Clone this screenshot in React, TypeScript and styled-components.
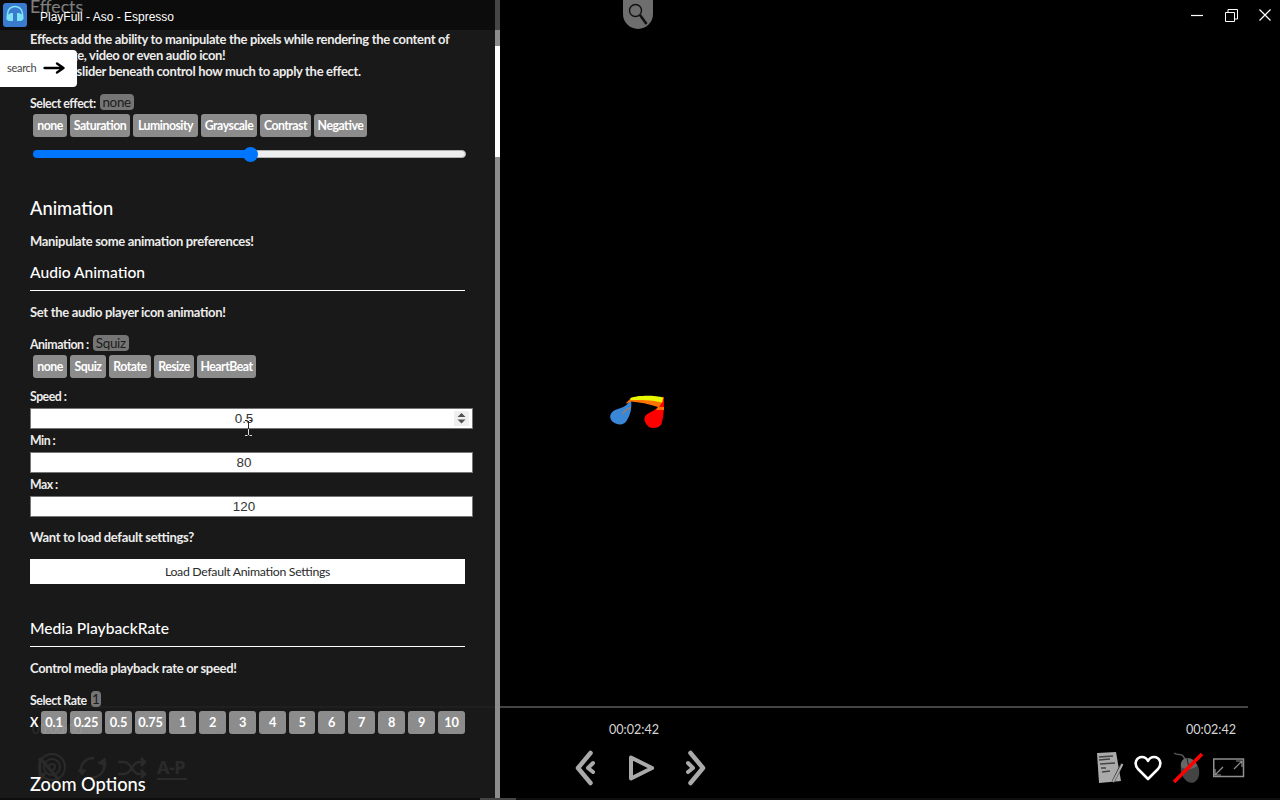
import React from "react";
import styled, { createGlobalStyle } from "styled-components";

const GlobalStyle = createGlobalStyle`
  * { box-sizing: border-box; }
  body {
    margin: 0;
    background: #000;
    color: #fff;
    font-family: Lato, "Open Sans", sans-serif;
    font-feature-settings: "liga" 1;
    overflow: hidden;
  }
  button, input { font-family: inherit; font-feature-settings: inherit; }
`;

const Window = styled.div`
  position: relative;
  width: 1280px;
  height: 800px;
  overflow: hidden;
  background: #000;
`;

/* ---------- player ---------- */

const Player = styled.main`
  height: 100%;
  display: flex;
  flex-direction: column;
`;

const Stage = styled.div`
  height: 706px;
  padding: 395px 0 0 609px;
`;

const NoteDrawing = styled.svg`
  display: block;
`;

const SeekBar = styled.div`
  height: 2px;
  margin: 0 32px;
  background: #444;
`;

const Times = styled.div`
  display: grid;
  grid-template-columns: 1fr 1fr 1fr;
  height: 42px;
  padding: 0 44px 0 32px;
  line-height: 43px;
  font-size: 12.6px;
  color: #d6d6d6;
  span:nth-child(2) { text-align: center; }
  span:nth-child(3) { text-align: right; }
`;

const Controls = styled.div`
  display: flex;
  align-items: center;
  justify-content: space-between;
  height: 36px;
  padding: 0 35px 0 37px;
`;

const Group = styled.div<{ $gap: number; $width?: number; $end?: boolean }>`
  display: flex;
  align-items: center;
  gap: ${(p) => p.$gap}px;
  width: ${(p) => (p.$width ? `${p.$width}px` : "auto")};
  justify-content: ${(p) => (p.$end ? "flex-end" : "flex-start")};
`;

const AutoPlay = styled.span`
  width: 30px;
  height: 23px;
  margin-left: -1px;
  border-bottom: 2px solid #aaa;
  color: #aaa;
  font: 700 18px/21px "Noto Sans", sans-serif;
  letter-spacing: -0.5px;
  white-space: nowrap;
`;

const BottomStrip = styled.div`
  height: 2px;
  margin-top: auto;
  padding-left: 480px;
  background: #0e0e0e;
`;

const BottomHandle = styled.div`
  width: 36px;
  height: 2px;
  background: #444;
`;

/* ---------- settings panel ---------- */

const Panel = styled.aside`
  position: absolute;
  inset: 0 auto 2px 0;
  width: 500px;
  display: flex;
  overflow: hidden;
`;

const Settings = styled.div`
  flex: 1;
  min-width: 0;
  padding: 0 30px;
  background: rgba(28, 28, 28, 0.9);
`;

const ScrollTrack = styled.div`
  flex: none;
  width: 5px;
  padding-top: 46px;
  background: #8c8c8c;
`;

const ScrollThumb = styled.div`
  height: 111px;
  background: #fff;
`;

const Heading = styled.h2<{ $top: number; $light?: boolean }>`
  height: 24px;
  margin: ${(p) => p.$top}px 0 0;
  font-size: ${(p) => (p.$light ? 17.7 : 18.3)}px;
  font-weight: ${(p) => (p.$light ? 400 : 500)};
  line-height: 24px;
`;

const SubHeading = styled.h3<{ $top: number }>`
  height: 29px;
  margin: ${(p) => p.$top}px 0 0;
  border-bottom: 1px solid #fff;
  font-size: 15.6px;
  font-weight: 500;
  line-height: 20px;
`;

const Text = styled.p<{ $top: number }>`
  position: relative;
  top: -1px;
  margin: ${(p) => p.$top}px 0 0;
  font-size: 13px;
  font-weight: 700;
  line-height: 16px;
  letter-spacing: -0.32px;
  color: #ececec;
  white-space: nowrap;
`;

const Choice = styled.div<{ $top: number }>`
  display: flex;
  align-items: center;
  height: 20px;
  margin-top: ${(p) => p.$top}px;
  gap: 4px;
  color: #ececec;
  font-size: 12.4px;
  font-weight: 700;
  letter-spacing: -0.48px;
  white-space: nowrap;
`;

const Current = styled.span<{ $width: number }>`
  width: ${(p) => p.$width}px;
  height: 16px;
  margin-top: -2px;
  border-radius: 4px;
  background: #757575;
  color: #1c1c1c;
  font-size: 13.4px;
  font-weight: 400;
  line-height: 17px;
  letter-spacing: -0.3px;
  text-align: center;
`;

const Options = styled.div<{ $rate?: boolean }>`
  display: flex;
  gap: 3px;
  height: 23px;
  margin: 1px 0 0 ${(p) => (p.$rate ? 0 : 3)}px;
  line-height: 23px;
`;

const RateSign = styled.span`
  width: 8px;
  font-size: 12.5px;
  font-weight: 700;
  line-height: 23px;
`;

const Option = styled.button<{ $width: number; $rate?: boolean }>`
  width: ${(p) => p.$width}px;
  flex: none;
  padding: 0;
  border: 0;
  border-radius: 3px;
  background: rgba(255, 255, 255, 0.5);
  color: #fff;
  font-size: ${(p) => (p.$rate ? 12.8 : 12.3)}px;
  font-weight: 700;
  letter-spacing: ${(p) => (p.$rate ? -0.2 : -0.5)}px;
  line-height: 23px;
  white-space: nowrap;
`;

const Slider = styled.div`
  display: flex;
  align-items: center;
  height: 16px;
  margin: 9px -1px 0 3px;
`;

const SliderFill = styled.div`
  width: 217px;
  height: 8px;
  border-radius: 4px 0 0 4px;
  background: #0075ff;
`;

const SliderThumb = styled.div`
  width: 15px;
  height: 15px;
  margin: 0 -8px 0 -7px;
  border-radius: 50%;
  background: #0075ff;
  z-index: 1;
`;

const SliderRest = styled.div`
  flex: 1;
  height: 8px;
  border: 1px solid #b2b2b2;
  border-radius: 0 4px 4px 0;
  background: #efefef;
`;

const Label = styled.label<{ $top: number }>`
  display: block;
  height: 16px;
  margin-top: ${(p) => p.$top}px;
  color: #ececec;
  font-size: 12.3px;
  font-weight: 700;
  line-height: 17px;
  letter-spacing: -0.5px;
`;

const Field = styled.div`
  display: flex;
  align-items: center;
  width: 443px;
  height: 21px;
  margin-top: 4px;
  padding-right: 3px;
  border: 1px solid #767676;
  background: #fff;
  color: #333;
  font: 13.4px/19px "Liberation Sans", sans-serif;
`;

const FieldValue = styled.span`
  flex: 1;
  padding-right: 8px;
  padding-left: 11px;
  text-align: center;
`;

const Spinner = styled.span`
  display: flex;
  width: 15px;
  height: 15px;
  background: #efefef;
`;

const SpinnerSpace = styled.span`
  width: 15px;
`;

const LoadDefaults = styled.button`
  display: block;
  width: 435px;
  height: 25px;
  margin-top: 13px;
  border: 0;
  padding: 0;
  background: #fff;
  color: #2a2a2a;
  font-size: 12.3px;
  line-height: 25px;
  letter-spacing: -0.31px;
`;

/* ---------- overlays ---------- */

const TitleBar = styled.header`
  position: absolute;
  inset: 0 0 auto 0;
  display: flex;
  align-items: center;
  height: 30px;
  padding: 0 7px 0 3px;
  background: rgba(0, 0, 0, 0.5);
`;

const AppTitle = styled.span`
  flex: 1;
  margin: 3px 0 0 13px;
  font: 12px "Liberation Sans", sans-serif;
`;

const SearchTab = styled.div`
  position: absolute;
  top: 50px;
  left: 0;
  display: flex;
  align-items: center;
  gap: 7px;
  width: 77px;
  height: 37px;
  padding-left: 7px;
  border-radius: 0 4px 4px 0;
  background: #fff;
  color: #444;
  font-size: 11px;
  letter-spacing: -0.3px;
  span { margin-top: -3px; }
  svg { margin-top: -1px; }
`;

const LensTab = styled.div`
  position: absolute;
  top: 0;
  left: 623px;
  width: 30px;
  height: 29px;
  border-radius: 0 0 15px 15px;
  background: #6e6e6e;
`;

const TextCursor = styled.svg`
  position: absolute;
  top: 420px;
  left: 244px;
`;

const EFFECTS: [string, number][] = [
  ["none", 34], ["Saturation", 60], ["Luminosity", 65], ["Grayscale", 56], ["Contrast", 51], ["Negative", 53],
];
const ANIMATIONS: [string, number][] = [
  ["none", 34], ["Squiz", 36], ["Rotate", 42], ["Resize", 40], ["HeartBeat", 59],
];
const RATES: [string, number][] = [
  ["0.1", 26], ["0.25", 32], ["0.5", 27], ["0.75", 31], ["1", 27], ["2", 27], ["3", 27],
  ["4", 27], ["5", 26], ["6", 27], ["7", 27], ["8", 27], ["9", 27], ["10", 27],
];

const Note = () => (
  <NoteDrawing width="56" height="34" viewBox="0 0 56 34">
    <path d="M22 4C18 12 12 13 6 15C0 18 0 24 4 27C9 31 16 30 18 25C22 19 23 12 22 4Z" fill="#3a87d8" />
    <path d="M54 2C52 12 46 15 40 18C33 21 35 28 40 32C45 34 52 33 53 27C55 20 55 11 55 2Z" fill="#f00" />
    <path d="M17 8L22 3L54 6L50 12H55V15H47L49 12C40 9 30 7 22 6.500L18 8.500ZM22 12C18 14 14 16 13 20C15 17 18 14 22 13Z" fill="#ff7300" />
    <path d="M21.500 3C28 0 46 0 54.500 2.500L53 7.500C43 5 31 5 21.500 5Z" fill="#e8f800" />
  </NoteDrawing>
);

const NumberField = ({ value, spin }: { value: string; spin?: boolean }) => (
  <Field>
    <FieldValue>{value}</FieldValue>
    {spin ? (
      <Spinner>
        <svg width="15" height="15" viewBox="0 0 15 15" fill="#505050">
          <path d="M3.500 6L7.500 2L11.500 6ZM3.500 8.500L7.500 12.500L11.500 8.500Z" />
        </svg>
      </Spinner>
    ) : (
      <SpinnerSpace />
    )}
  </Field>
);

export default function App() {
  return (
    <Window>
      <GlobalStyle />
      <Player>
        <Stage><Note /></Stage>
        <SeekBar />
        <Times><span>00:00:00</span><span>00:02:42</span><span>00:02:42</span></Times>
        <Controls>
          <Group $gap={11} $width={300}>
            <svg width="30" height="30" viewBox="0 0 30 30" fill="none" stroke="#aaa" strokeWidth="2">
              <circle cx="15" cy="14" r="13" /><circle cx="15" cy="14" r="8" /><circle cx="15" cy="14" r="3" />
              <path d="M3 5L3 26L8 20M3 5L22 27" strokeWidth="3" />
            </svg>
            <svg width="29" height="26" viewBox="0 0 29 26" fill="none" stroke="#aaa" strokeWidth="2.500">
              <path d="M3 16C2 9 8 3 16 3M26 8C28 16 21 23 12 23" />
              <path d="M0 15L4 20L8 15ZM20 8L27 3L28 11Z" fill="#aaa" strokeWidth="1" />
            </svg>
            <svg width="29" height="22" viewBox="0 0 29 22" fill="none" stroke="#aaa" strokeWidth="2.500">
              <path d="M0 5H6C14 5 14 17 21 17H27M0 17H6C14 17 14 5 21 5H27M23 1L27 5L23 9M23 13L27 17L23 21" />
            </svg>
            <AutoPlay>A-P</AutoPlay>
          </Group>
          <Group $gap={31}>
            <svg width="22" height="36" viewBox="0 0 22 36" fill="none" stroke="#aaa" strokeWidth="4.500" strokeLinecap="round" strokeLinejoin="round">
              <path d="M16.500 3L4 18L16.500 33" /><path d="M19 13L14 18L19 22" strokeWidth="4" />
            </svg>
            <svg width="28" height="28" viewBox="0 0 28 28" fill="none" stroke="#aaa" strokeWidth="4" strokeLinejoin="round">
              <path d="M4 3.500V24.500L25 14Z" />
            </svg>
            <svg width="22" height="36" viewBox="0 0 22 36" fill="none" stroke="#aaa" strokeWidth="4.500" strokeLinecap="round" strokeLinejoin="round">
              <path d="M4.500 3L17 18L4.500 33" /><path d="M2 13L7 18L2 22" strokeWidth="4" />
            </svg>
          </Group>
          <Group $gap={10} $width={300} $end>
            <svg width="28" height="32" viewBox="0 0 28 32">
              <path d="M1 1L20 0L25 29L3 31Z" fill="#aaa" />
              <path d="M3 5L17 4M3 8L14 7M4 12L19 11M5 16L10 16M6 20L14 19" stroke="#444" strokeWidth="1.300" />
              <path d="M17 30L26 12" stroke="#333" strokeWidth="3" />
              <path d="M17 30L26.500 12" stroke="#aaa" strokeWidth="2" />
            </svg>
            <svg width="28" height="26" viewBox="0 0 28 26" fill="none" stroke="#fff" strokeWidth="2.600" strokeLinejoin="round">
              <path d="M14 24L4 14C-1 8 3 2 8 2C11 2 13 4 14 6C15 4 17 2 20 2C25 2 29 8 24 14Z" />
            </svg>
            <svg width="31" height="32" viewBox="0 0 31 32" fill="none">
              <path d="M2 1C6 4 9 1 11 4L13 7" stroke="#555" strokeWidth="1.500" />
              <ellipse cx="18" cy="18.500" rx="9" ry="12.500" transform="rotate(-14 18 18.500)" fill="#444" />
              <path d="M9 15C8 10 11 6 15 6C20 6 24 10 25 14C20 18 14 18 9 15Z" fill="#666" />
              <path d="M15 6L17 16" stroke="#222" />
              <path d="M2 30L30 2" stroke="#f00" strokeWidth="3.500" />
            </svg>
            <svg width="32" height="20" viewBox="0 0 32 20" fill="none" stroke="#8f8f8f" strokeWidth="1.500">
              <path d="M.75 1H30.500V18.500H.75Z" />
              <path d="M21 11L29 3M23 3H29V9M10 9L2 17M2 11V17H8" strokeWidth="1.200" />
            </svg>
          </Group>
        </Controls>
        <BottomStrip><BottomHandle /></BottomStrip>
      </Player>

      <Panel>
        <Settings>
          <Heading $top={-5} $light>Effects</Heading>
          <Text $top={13}>
            Effects add the ability to manipulate the pixels while rendering the content of<br />
            the image, video or even audio icon!<br />
            And the slider beneath control how much to apply the effect.
          </Text>
          <Choice $top={13}>Select effect: <Current $width={34}>none</Current></Choice>
          <Options>{EFFECTS.map(([n, w]) => <Option key={n} $width={w}>{n}</Option>)}</Options>
          <Slider><SliderFill /><SliderThumb /><SliderRest /></Slider>

          <Heading $top={34}>Animation</Heading>
          <Text $top={14}>Manipulate some animation preferences!</Text>
          <SubHeading $top={12}>Audio Animation</SubHeading>
          <Text $top={14}>Set the audio player icon animation!</Text>
          <Choice $top={13}>Animation : <Current $width={36}>Squiz</Current></Choice>
          <Options>{ANIMATIONS.map(([n, w]) => <Option key={n} $width={w}>{n}</Option>)}</Options>
          <Label $top={10}>Speed :</Label>
          <NumberField value="0.5" spin />
          <Label $top={3}>Min :</Label>
          <NumberField value="80" />
          <Label $top={3}>Max :</Label>
          <NumberField value="120" />
          <Text $top={13}>Want to load default settings?</Text>
          <LoadDefaults>Load Default Animation Settings</LoadDefaults>

          <SubHeading $top={34}>Media PlaybackRate</SubHeading>
          <Text $top={14}>Control media playback rate or speed!</Text>
          <Choice $top={13}>Select Rate <Current $width={10}>1</Current></Choice>
          <Options $rate>
            <RateSign>X</RateSign>
            {RATES.map(([n, w]) => <Option key={n} $width={w} $rate>{n}</Option>)}
          </Options>

          <Heading $top={38}>Zoom Options</Heading>
        </Settings>
        <ScrollTrack><ScrollThumb /></ScrollTrack>
      </Panel>

      <TextCursor width="9" height="16" viewBox="0 0 9 16" fill="none" strokeWidth="1">
        <path d="M1 .5H3.500M5.500 .5H8M4.500 1V9" stroke="#222" />
        <path d="M4.500 9V15M1 15.500H3.500M5.500 15.500H8" stroke="#ddd" />
      </TextCursor>

      <SearchTab>
        <span>search</span>
        <svg width="22" height="12" viewBox="0 0 22 12" fill="none" stroke="#000" strokeWidth="2.300" strokeLinecap="round" strokeLinejoin="round">
          <path d="M1.500 6H20M14 1.500L20.500 6L14 10.500" />
        </svg>
      </SearchTab>

      <TitleBar>
        <svg width="24" height="24" viewBox="0 0 24 24">
          <rect width="24" height="24" rx="3" fill="#3a7bd0" />
          <path d="M4.500 14V11C4.500 1 19.500 1 19.500 11V14" fill="none" stroke="#7fe3f5" strokeWidth="1.600" />
          <path d="M8 10H10V18H7C2 18 2 12 8 10ZM16 10H14V18H17C22 18 22 12 16 10Z" fill="#7fe3f5" />
        </svg>
        <AppTitle>PlayFull - Aso - Espresso</AppTitle>
        <svg width="84" height="14" viewBox="0 0 84 14" fill="none" stroke="#fff" strokeWidth="1.200">
          <path d="M2 7.500H14" />
          <path d="M36.500 4.500H45.500V13.500H36.500ZM39 4V1.500H48.500V11H46" strokeWidth="1" />
          <path d="M70.500 1.500L81.500 12.500M81.500 1.500L70.500 12.500" />
        </svg>
      </TitleBar>

      <LensTab>
        <svg width="30" height="29" viewBox="0 0 30 29" fill="none" stroke="#111">
          <circle cx="12.500" cy="10.500" r="6" strokeWidth="1.400" />
          <path d="M17 15L23.500 24" strokeWidth="2.500" />
        </svg>
      </LensTab>
    </Window>
  );
}
